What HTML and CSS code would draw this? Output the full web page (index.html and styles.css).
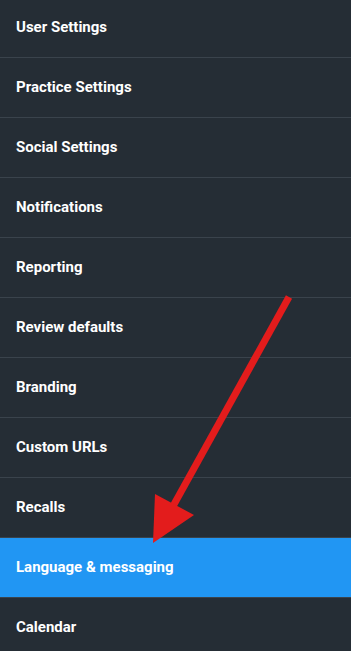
FILE: index.html
```html
<!DOCTYPE html>
<html>
<head>
<meta charset="utf-8">
<link rel="stylesheet" href="styles.css">
</head>
<body>
<div class="screen">
  <ul class="menu">
    <li class="item">User Settings</li>
    <li class="item">Practice Settings</li>
    <li class="item">Social Settings</li>
    <li class="item">Notifications</li>
    <li class="item">Reporting</li>
    <li class="item">Review defaults</li>
    <li class="item">Branding</li>
    <li class="item">Custom URLs</li>
    <li class="item">Recalls</li>
    <li class="item active">Language &amp; messaging</li>
    <li class="item">Calendar</li>
  </ul>
  <svg class="arrow" width="351" height="651" viewBox="0 0 351 651">
    <line x1="289" y1="297" x2="172" y2="508" stroke="#e31c1c" stroke-width="7"/>
    <polygon points="153,543 155,494 194,515" fill="#e31c1c"/>
  </svg>
</div>
</body>
</html>
```
FILE: styles.css
```css
html, body {
  margin: 0;
  padding: 0;
  background: #252d35;
}
.screen {
  position: relative;
  width: 351px;
  height: 651px;
  overflow: hidden;
  background: #252d35;
}
.menu {
  list-style: none;
  margin: -2px 0 0 0;
  padding: 0;
}
.item {
  height: 59px;
  border-bottom: 1px solid #3a434c;
  display: flex;
  align-items: center;
  padding-left: 16px;
  padding-bottom: 1px;
  box-sizing: border-box;
  height: 60px;
  font-family: Roboto, "Liberation Sans", sans-serif;
  font-weight: 700;
  font-size: 15px;
  color: #ffffff;
}
.item.active {
  background: #2196f3;
}
.arrow {
  position: absolute;
  left: 0;
  top: 0;
}
```
